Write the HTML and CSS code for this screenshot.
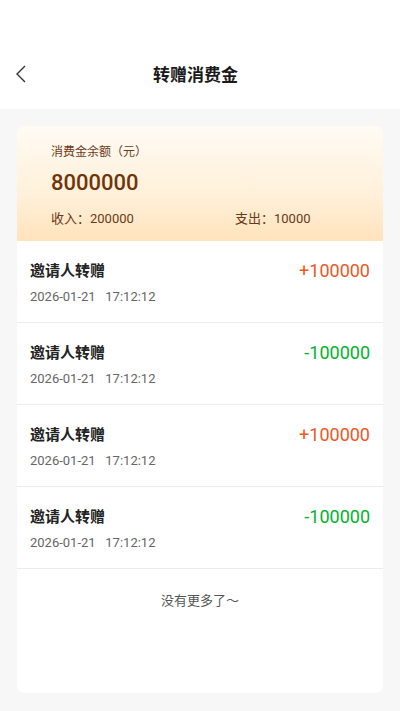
FILE: index.html
```html
<!DOCTYPE html>
<html lang="zh">
<head>
<meta charset="utf-8">
<link rel="stylesheet" href="styles.css">
</head>
<body>
<div class="page">
  <header class="nav">
    <svg class="back" width="12" height="18" viewBox="0 0 12 18"><path d="M10 1 L2 9 L10 17" fill="none" stroke="#333" stroke-width="1.4"/></svg>
    <div class="title">转赠消费金</div>
  </header>
  <main class="content">
    <section class="card">
      <div class="summary">
        <div class="label">消费金余额（元）</div>
        <div class="balance">8000000</div>
        <div class="stats">
          <span class="stat">收入：200000</span>
          <span class="stat">支出：10000</span>
        </div>
      </div>
      <div class="list">
        <div class="row">
          <div class="info"><div class="name">邀请人转赠</div><div class="date">2026-01-21&nbsp;&nbsp;&nbsp;17:12:12</div></div>
          <div class="amount plus">+100000</div>
        </div>
        <div class="row">
          <div class="info"><div class="name">邀请人转赠</div><div class="date">2026-01-21&nbsp;&nbsp;&nbsp;17:12:12</div></div>
          <div class="amount minus">-100000</div>
        </div>
        <div class="row">
          <div class="info"><div class="name">邀请人转赠</div><div class="date">2026-01-21&nbsp;&nbsp;&nbsp;17:12:12</div></div>
          <div class="amount plus">+100000</div>
        </div>
        <div class="row">
          <div class="info"><div class="name">邀请人转赠</div><div class="date">2026-01-21&nbsp;&nbsp;&nbsp;17:12:12</div></div>
          <div class="amount minus">-100000</div>
        </div>
      </div>
      <div class="end">没有更多了～</div>
    </section>
  </main>
</div>
</body>
</html>
```
FILE: styles.css
```css
* { box-sizing: border-box; }
html, body { margin: 0; padding: 0; }
body {
  width: 400px;
  height: 711px;
  background: #f7f7f7;
  font-family: Roboto, "Noto Sans CJK SC", sans-serif;
  overflow: hidden;
}
.nav {
  height: 109px;
  background: #fff;
  position: relative;
  display: flex;
  align-items: center;
  justify-content: center;
  padding-top: 38px;
}
.back {
  position: absolute;
  left: 15px;
  top: 65px;
}
.title {
  font-size: 17px;
  font-weight: 700;
  color: #1a1a1a;
  margin-right: 9px;
}
.content {
  padding: 17px 17px 0;
}
.card {
  background: #fff;
  border-radius: 7px;
  overflow: hidden;
  height: 567px;
  display: flex;
  flex-direction: column;
}
.summary {
  background: linear-gradient(180deg, #fffbf4 0%, #fff0da 60%, #ffe3bb 100%);
  padding: 17px 34px 0;
  height: 115px;
  flex-shrink: 0;
}
.label {
  font-size: 12px;
  color: #6a3a18;
  line-height: 18px;
}
.balance {
  font-size: 22px;
  font-weight: 500;
  color: #713508;
  line-height: 28px;
  margin-top: 8px;
}
.stats {
  display: grid;
  grid-template-columns: 184px 1fr;
  margin-top: 13px;
  font-size: 13px;
  color: #6a3a18;
  line-height: 18px;
}
.row {
  height: 82px;
  border-bottom: 1px solid #ececec;
  display: flex;
  justify-content: space-between;
  align-items: flex-start;
  padding: 18px 13px 0 13px;
}
.name {
  font-size: 15px;
  font-weight: 700;
  color: #222;
  line-height: 24px;
}
.date {
  font-size: 13px;
  color: #666;
  line-height: 18px;
  margin-top: 5px;
}
.amount {
  font-size: 18px;
  line-height: 24px;
}
.plus { color: #f0561e; }
.minus { color: #00b32a; }
.end {
  text-align: center;
  font-size: 13px;
  color: #555;
  margin-top: 22px;
  line-height: 20px;
}
```
